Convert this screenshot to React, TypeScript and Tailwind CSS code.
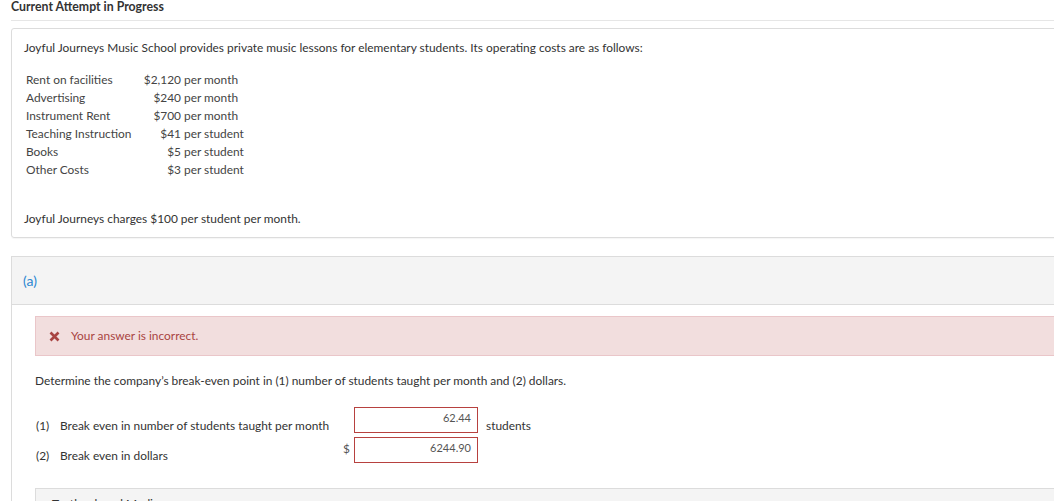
import * as React from "react";

const COSTS = [
  { label: "Rent on facilities", amount: "$2,120", unit: "per month" },
  { label: "Advertising", amount: "$240", unit: "per month" },
  { label: "Instrument Rent", amount: "$700", unit: "per month" },
  { label: "Teaching Instruction", amount: "$41", unit: "per student" },
  { label: "Books", amount: "$5", unit: "per student" },
  { label: "Other Costs", amount: "$3", unit: "per student" },
];

function AnswerInput({ value }: { value: string }) {
  return (
    <div className="h-[26px] w-[124px] border border-[#b7413f] bg-white pr-[6px] pt-[3px] text-right text-[11px] leading-[14px] text-[#555]">
      {value}
    </div>
  );
}

export default function App() {
  return (
    <div
      className="h-[501px] w-[1054px] overflow-hidden bg-white text-[#333]"
      style={{ fontFamily: "Lato, 'Open Sans', sans-serif" }}
    >
      <div className="w-[1110px] pl-[11px]">
        <div className="h-[21px] border-b border-[#e6e6e6] text-[12.3px] font-bold leading-[14px] text-[#333]">
          Current Attempt in Progress
        </div>

        <div className="mt-[7px] rounded-[3px] border border-[#dcdcdc] px-[12px] pt-[11px] pb-[10px] text-[11.9px] shadow-[0_1px_1px_rgba(0,0,0,0.04)]">
          <p className="leading-[16px]">
            Joyful Journeys Music School provides private music lessons for elementary students. Its operating costs are as follows:
          </p>

          <table className="mt-[15px] ml-[2px] border-collapse text-[11.9px] text-[#444]">
            <tbody>
              {COSTS.map((c) => (
                <tr key={c.label} className="h-[18px]">
                  <td className="w-[114px] p-0 leading-[18px]">{c.label}</td>
                  <td className="w-[41px] p-0 text-right leading-[18px]">{c.amount}</td>
                  <td className="p-0 pl-[3px] leading-[18px]">{c.unit}</td>
                </tr>
              ))}
            </tbody>
          </table>

          <p className="mt-[32px] leading-[16px]">
            Joyful Journeys charges $100 per student per month.
          </p>
        </div>

        <div className="mt-[18px] border-l border-t border-[#dcdcdc]">
          <div className="flex h-[48px] items-center border-b border-[#dcdcdc] bg-[#f4f4f4] pl-[11px] text-[14px] text-[#2b87d1]">
            (a)
          </div>

          <div className="pl-[23px] pt-[11px] text-[11.9px]">
            <div className="flex h-[40px] items-center gap-[11px] border border-[#eac6c9] bg-[#f2dede] pl-[13px] text-[#a94442]">
              <svg width="11" height="11" viewBox="0 0 11 11" className="mt-[1px]">
                <path d="M1.5 1.5 L9.5 9.5 M9.5 1.5 L1.5 9.5" stroke="#a94442" strokeWidth="2.6" />
              </svg>
              <span>Your answer is incorrect.</span>
            </div>

            <p className="mt-[17px] leading-[16px] text-[#333]">
              Determine the company’s break-even point in (1) number of students taught per month and (2) dollars.
            </p>

            <div className="mt-[18px] flex flex-col gap-[4px]">
              <div className="flex items-end">
                <div className="flex w-[308px] leading-[14px]">
                  <span className="w-[25px] pl-[1px]">(1)</span>
                  <span>Break even in number of students taught per month</span>
                </div>
                <div className="w-[11px]" />
                <AnswerInput value="62.44" />
                <span className="ml-[8px] leading-[14px]">students</span>
              </div>
              <div className="flex items-end">
                <div className="flex w-[308px] leading-[14px]">
                  <span className="w-[25px] pl-[1px]">(2)</span>
                  <span>Break even in dollars</span>
                </div>
                <span className="mb-[7px] w-[11px] leading-[14px] text-[#555]">$</span>
                <AnswerInput value="6244.90" />
              </div>
            </div>

            <div className="mt-[25px] h-[40px] border border-[#dcdcdc] bg-[#f4f4f4] pl-[16px] pt-[6px] text-[12px] text-[#333]">
              Textbook and Media
            </div>
          </div>
        </div>
      </div>
    </div>
  );
}
